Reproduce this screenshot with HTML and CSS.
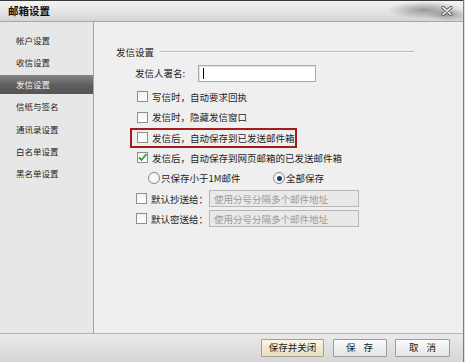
FILE: index.html
```html
<!DOCTYPE html>
<html>
<head>
<meta charset="utf-8">
<link rel="stylesheet" href="styles.css">
</head>
<body>
<div class="window">
  <div class="titlebar">
    <span class="title">邮箱设置</span>
    <span class="close">
      <svg width="12" height="10" viewBox="0 0 12 10">
        <path d="M2 1.5 L10 8.5 M10 1.5 L2 8.5" stroke="#555" stroke-width="3.2" stroke-linecap="round"/>
        <path d="M2 1.5 L10 8.5 M10 1.5 L2 8.5" stroke="#fff" stroke-width="1.6" stroke-linecap="round"/>
      </svg>
    </span>
  </div>
  <div class="main">
    <ul class="sidebar">
      <li class="nav">帐户设置</li>
      <li class="nav">收信设置</li>
      <li class="nav active">发信设置</li>
      <li class="nav">信纸与签名</li>
      <li class="nav">通讯录设置</li>
      <li class="nav">白名单设置</li>
      <li class="nav">黑名单设置</li>
    </ul>
    <div class="content">
      <div class="section-head"><span>发信设置</span><i class="rule"></i></div>
      <div class="row sig">
        <span class="label">发信人署名:</span>
        <span class="textbox"><i class="caret"></i></span>
      </div>
      <div class="rows">
        <div class="row opt"><span class="cb"></span><span>写信时，自动要求回执</span></div>
        <div class="row opt"><span class="cb"></span><span>发信时，隐藏发信窗口</span></div>
        <div class="row opt"><div class="hl"><span class="cb"></span><span>发信后，自动保存到已发送邮件箱</span></div></div>
        <div class="row opt"><span class="cb checked">
          <svg width="11" height="11" viewBox="0 0 11 11"><path d="M2 5.5 L4.5 8 L9.5 2" fill="none" stroke="#2aa32a" stroke-width="1.8"/></svg>
        </span><span>发信后，自动保存到网页邮箱的已发送邮件箱</span></div>
        <div class="row radios">
          <span class="radio-item r1"><span class="radio"></span><span>只保存小于1M邮件</span></span>
          <span class="radio-item"><span class="radio on"></span><span>全部保存</span></span>
        </div>
        <div class="row opt cc"><span class="cb"></span><span class="cclabel">默认抄送给：</span><span class="field">使用分号分隔多个邮件地址</span></div>
        <div class="row opt cc"><span class="cb"></span><span class="cclabel">默认密送给：</span><span class="field">使用分号分隔多个邮件地址</span></div>
      </div>
    </div>
  </div>
  <div class="footer">
    <button class="btn primary">保存并关闭</button>
    <button class="btn w54 spaced">保 存</button>
    <button class="btn w55 spaced">取 消</button>
  </div>
</div>
</body>
</html>
```

FILE: styles.css
```css
* { box-sizing: border-box; }
html, body { margin: 0; padding: 0; }
body {
  width: 465px; height: 362px; overflow: hidden;
  font-family: "Noto Sans CJK SC", "Noto Sans", sans-serif;
  color: #1e1e1e;
  background: #dcdcdc;
}
.window {
  width: 464px; height: 362px;
  display: flex; flex-direction: column;
  border-right: 1px solid #7c7c7c;
  background: #efefef;
}
.titlebar {
  height: 22px;
  flex: none;
  border-top: 1px solid #3a3a3a;
  border-bottom: 1px solid #a8a8a8;
  background:
    radial-gradient(ellipse 38px 9px at 425px 9px, rgba(100,100,100,0.6), rgba(150,150,150,0) 100%),
    radial-gradient(ellipse 22px 6px at 448px 14px, rgba(110,110,110,0.55), rgba(150,150,150,0) 100%),
    linear-gradient(#f4f4f4, #e2e2e2 60%, #d4d4d4);
  display: flex; align-items: center; justify-content: space-between;
  padding: 0 10px 0 8px;
}
.title { font-size: 10.5px; font-weight: bold; color: #111; line-height: 1; margin-top: 1px; }
.close { display: flex; margin-top: -1px; }
.main { flex: 1; display: flex; min-height: 0; }
.sidebar {
  list-style: none; margin: 0;
  width: 94px; flex: none;
  background: #e7e7e7;
  border-right: 1px solid #a6a6a6;
  padding: 8.5px 0 0 0;
  display: flex; flex-direction: column; gap: 3.33px;
}
.nav {
  height: 19px; line-height: 19px;
  font-size: 8.5px; padding-left: 16px; color: #1e1e1e;
}
.nav.active {
  background: linear-gradient(#858585, #5e5e5e 55%, #555);
  color: #f2f2f2;
}
.content {
  flex: 1; padding: 20px 49px 0 22px;
  font-size: 9.5px;
}
.section-head { height: 20px; display: flex; align-items: center; gap: 6px; }
.rule { flex: 1; height: 2px; border-top: 1px solid #b9b9b9; border-bottom: 1px solid #fbfbfb; }
.row { display: flex; align-items: center; }
.sig { height: 20px; padding-left: 19px; margin-top: 1px; }
.label { width: 63px; }
.textbox {
  width: 118px; height: 17px; background: #fff;
  border: 1px solid #a9a9a9; box-shadow: inset 1px 1px 0 #e2e2e2;
  display: flex; align-items: center; padding-left: 4px;
}
.caret { width: 1px; height: 11px; background: #000; }
.rows { margin-top: 3.8px; display: flex; flex-direction: column; }
.rows .row { height: 20.33px; }
.opt { padding-left: 21px; }
.cb {
  width: 11px; height: 11px; flex: none;
  border: 1px solid #8e8e8e; background: linear-gradient(#f2f2f2, #fff);
  margin-right: 4px; display: flex; align-items: center; justify-content: center;
}
.cb svg { display: block; margin: -1px; }
.hl {
  display: flex; align-items: center;
  margin-left: -7px; width: 167px; height: 20px;
  border: 2px solid #a31d1d; padding-left: 5px;
}
.radios { padding-left: 32px; }
.radio-item { display: flex; align-items: center; }
.r1 { width: 125px; }
.radio {
  width: 12px; height: 12px; border-radius: 50%;
  border: 1px solid #8a8a8a; background: radial-gradient(#fff, #ececec);
  margin-right: 1px; display: flex; align-items: center; justify-content: center;
}
.radio.on::after { content: ""; width: 5px; height: 5px; border-radius: 50%; background: #1f3a66; }
.cc { padding-left: 20px; }
.cclabel { width: 58px; }
.field {
  width: 150px; height: 17px; border: 1px solid #b7b7b7;
  background: #e9e9e9; color: #9a9a9a; padding-left: 4px;
  display: flex; align-items: center;
}
.footer {
  height: 29px; flex: none;
  border-top: 1px solid #b4b4b4;
  background: linear-gradient(#eaeaea, #d6d6d6);
  display: flex; align-items: center; justify-content: flex-end;
  gap: 8.5px; padding: 0 13px 0 0;
}
.btn {
  height: 18px; font-family: inherit; font-size: 9.5px; color: #222;
  border: 1px solid #9c9c9c; border-radius: 1px;
  background: linear-gradient(#fbfbfb, #e4e4e4);
  padding: 0; line-height: 1;
}
.btn.spaced { word-spacing: 6px; }
.btn.primary { width: 63px; background: linear-gradient(#fbf5e6, #e9dcc0); border-color: #a8a08c; }
.w54 { width: 54px; }
.w55 { width: 55px; }
```
